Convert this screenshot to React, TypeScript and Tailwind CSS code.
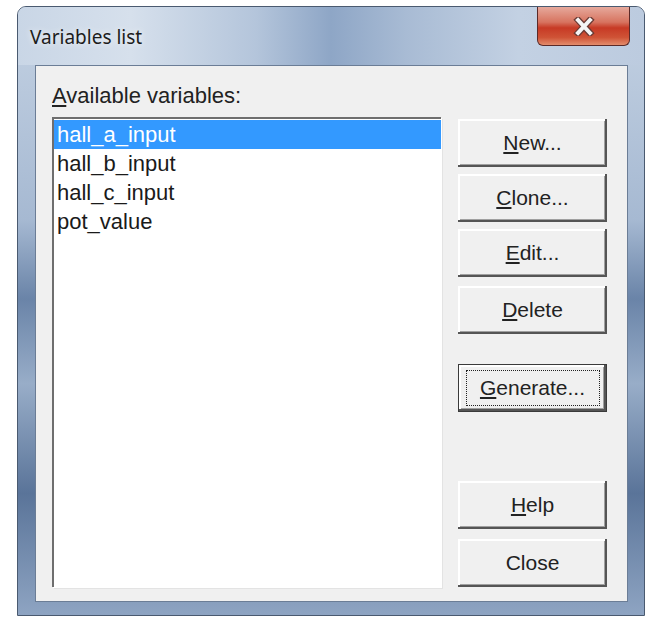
import type { ReactNode } from "react";

const variables = ["hall_a_input", "hall_b_input", "hall_c_input", "pot_value"];

// underline the access-key letter of a label
const Key = ({ children }: { children: ReactNode }) => <span className="underline underline-offset-2">{children}</span>;

const Button = ({ children, focused = false, className = "" }: { children: ReactNode; focused?: boolean; className?: string }) => (
    <div className={`h-[48px] w-full shrink-0 bg-[#f0f0f0] ${focused ? "border border-[#3a3a3a]" : ""} ${className}`}>
        <div className="w-full h-full flex items-center justify-center shadow-[inset_-2px_-2px_0_#555,inset_2px_2px_0_#fff,inset_-3px_-3px_0_#a0a0a0]">
            <div className={`flex items-center justify-center ${focused ? "border border-dotted border-[#222] h-[36px] w-[134px]" : ""}`}>
                <span className="text-[21px] leading-[24px] text-[#222]">{children}</span>
            </div>
        </div>
    </div>
);

export default function App() {
    return (
        <div className="w-[647px] h-[617px] bg-white pt-[6px] pl-[17px] font-['Liberation_Sans',Arial,sans-serif]">
            <div className="w-[628px] h-[610px] rounded-t-[9px] border border-[#4a5a70] bg-[linear-gradient(180deg,#c4d2e3_0%,#a6b9d2_35%,#6a84a8_48%,#98adc8_62%,#5a7499_80%,#8ea4c2_100%)] flex flex-col">
                {/* title bar */}
                <div className="h-[58px] flex items-start rounded-t-[8px] bg-[linear-gradient(90deg,#c9d6e6_0%,#d6e0ec_18%,#b4c5db_38%,#8ea6c6_50%,#a8bbd4_62%,#c3d1e3_80%,#bccbdf_100%)]">
                    <div className="pl-[12px] pt-[17px] flex-1 text-[19px] leading-[26px] text-[#1c1c1c] font-['Noto_Sans',sans-serif] [text-shadow:0_0_6px_rgba(255,255,255,0.9)]">
                        Variables list
                    </div>
                    <div className="mr-[14px] w-[93px] h-[39px] rounded-b-[6px] border border-t-0 border-[#5b2a28] bg-[linear-gradient(180deg,#e6a99c_0%,#d7735f_40%,#c73a25_55%,#cf5336_80%,#e38c6c_100%)] flex items-center justify-center">
                        <svg width="24" height="19" viewBox="0 0 24 19">
                            <path d="M6 3 L18 16 M18 3 L6 16" stroke="#6a3a34" strokeWidth="6.5" strokeLinecap="square" />
                            <path d="M6 3 L18 16 M18 3 L6 16" stroke="#f4f4f4" strokeWidth="4" strokeLinecap="square" />
                        </svg>
                    </div>
                </div>
                {/* client area */}
                <div className="ml-[17px] mr-[16px] h-[537px] border border-[#6b7d96] bg-[#f0f0f0] px-[16px] pt-[18px]">
                    <div className="text-[22px] leading-[24px] text-[#222]">
                        <Key>A</Key>vailable variables:
                    </div>
                    <div className="mt-[9px] flex">
                        <div className="w-[389px] h-[470px] bg-white border-t-2 border-l-2 border-[#6e6e6e] shadow-[1px_1px_0_#fff,2px_2px_0_#e3e3e3] pt-[1px]">
                            {variables.map((name, i) => (
                                <div key={name} className={`h-[29px] leading-[29px] pl-[3px] text-[22px] ${i === 0 ? "bg-[#3399ff] text-white" : "text-[#1a1a1a]"}`}>
                                    {name}
                                </div>
                            ))}
                        </div>
                        <div className="ml-[17px] w-[149px] flex flex-col">
                            <Button className="mt-[2px]"><Key>N</Key>ew...</Button>
                            <Button className="mt-[7px]"><Key>C</Key>lone...</Button>
                            <Button className="mt-[7px]"><Key>E</Key>dit...</Button>
                            <Button className="mt-[9px]"><Key>D</Key>elete</Button>
                            <Button focused className="mt-[30px]"><Key>G</Key>enerate...</Button>
                            <Button className="mt-[69px]"><Key>H</Key>elp</Button>
                            <Button className="mt-[10px]">Close</Button>
                        </div>
                    </div>
                </div>
            </div>
        </div>
    );
}
